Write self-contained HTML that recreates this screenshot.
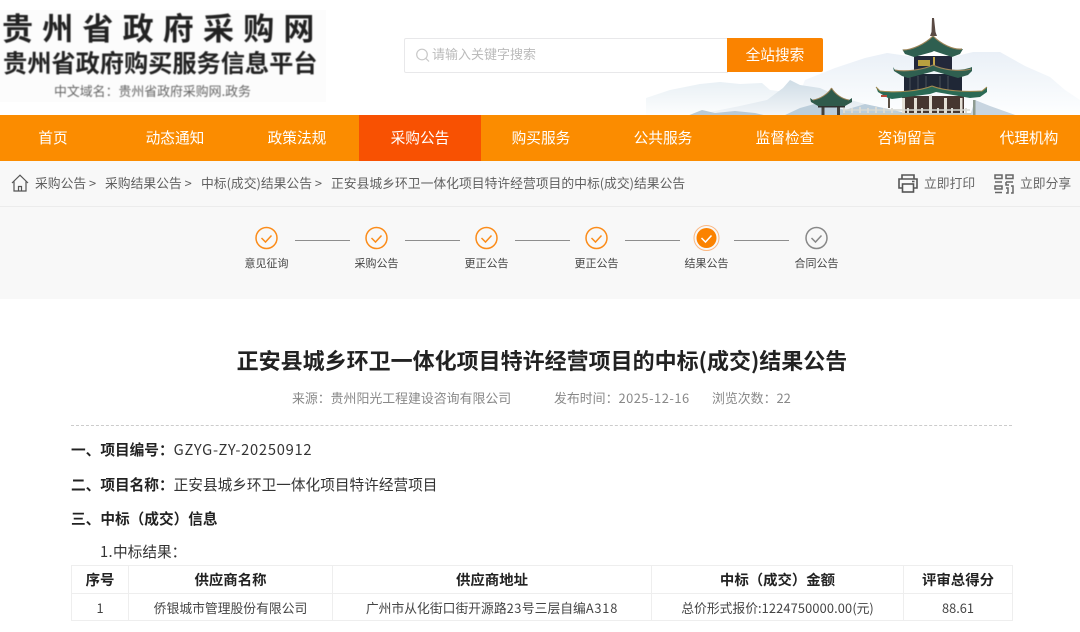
<!DOCTYPE html>
<html lang="zh-CN"><head><meta charset="utf-8"><title>中标(成交)结果公告</title>
<style>
*{box-sizing:border-box;margin:0;padding:0}
html,body{width:1080px;height:632px;overflow:hidden;background:#fff}
body{position:relative;font-family:"Noto Sans CJK SC","Liberation Sans",sans-serif;color:#333}
.a{position:absolute;white-space:nowrap;line-height:1}
.c{font-family:"Noto Sans CJK TC",sans-serif}
.nav{position:absolute;left:0;top:115px;width:1080px;height:46px;background:#fb8c00}
.nav div{position:absolute;top:0;width:122px;height:46px;line-height:46px;text-align:center;color:#fff;font-size:14.7px}
.nav .on{background:#f85102}
.st{position:absolute;width:60px;text-align:center;font-size:11px;line-height:14px;top:256px;color:#444}
.ln{position:absolute;top:240px;width:55px;height:1px;background:#8e8e8e}
.bc{top:177px;font-size:12.8px;color:#5f5f5f}
table{position:absolute;left:71px;top:565px;width:941px;border-collapse:collapse;table-layout:fixed}
td,th{border:1px solid #eee;text-align:center;font-size:12.8px;color:#444;font-weight:400;height:27px;padding:0}
th{font-weight:700;font-size:14.4px;color:#222;height:28px}
</style></head><body>

<div style="position:absolute;left:0;top:10px;width:326px;height:92px;background:#fcfcfc"></div>
<div style="filter:blur(.4px)">
<div class="a" style="left:2px;top:11px;font-size:31px;font-weight:700;letter-spacing:9.2px;color:#222">贵州省政府采购网</div>
<div class="a" style="left:3px;top:50px;font-size:24.2px;font-weight:700;color:#222">贵州省政府购买服务信息平台</div>
<div class="a" style="left:54px;top:85px;font-size:12.9px;color:#666">中文域名<span class="c">：</span>贵州省政府采购网.政务</div>
</div>

<svg style="position:absolute;left:640px;top:0" width="440" height="116" viewBox="0 0 440 116">
<defs>
<linearGradient id="m" x1="0" y1="0" x2="0" y2="1"><stop offset="0" stop-color="#eaf0f7"/><stop offset="1" stop-color="#feffff"/></linearGradient>
<linearGradient id="f" x1="0" y1="0" x2="0" y2="1"><stop offset="0" stop-color="#e9f0f5"/><stop offset="1" stop-color="#fdfefe"/></linearGradient>
<linearGradient id="n" x1="0" y1="0" x2="0" y2="1"><stop offset="0" stop-color="#cfdde6"/><stop offset="1" stop-color="#f3f6f9"/></linearGradient>
</defs>
<path d="M6 98 30 90 60 84 80 82 100 84 122 83 130 90 180 96 190 116H6Z" fill="url(#f)"/>
<path d="M165 80 195 68 225 58 247 53 275 57 300 60 333 52 360 52 385 66 410 77 425 90 440 100V116H150Z" fill="url(#m)"/>
<path d="M70 112 100 106 127 100 143 88 150 80 160 85 180 88 200 97 225 104 250 110 265 116H60Z" fill="url(#n)"/>
<path d="M47 116 62 110 75 113 95 111 115 113 128 116Z" fill="#b9cad7"/>
<path d="M143 116 160 108 178 103 205 110 225 104 262 112 270 116Z" fill="#bccedb"/>
<path d="M335 100 350 106 378 116H330Z" fill="#c8d5e0"/>
<!-- spire -->
<path d="M292 18h2l1.500 14 1.500 4h-7l1.500-4Z" fill="#5a4a44"/>
<!-- top tier -->
<rect x="274" y="56" width="38" height="14" fill="#23283a"/>
<rect x="278" y="60" width="12" height="6" fill="#b9a03f"/>
<rect x="293" y="57" width="2" height="8" fill="#c5a84a"/>
<path d="M293 36C285 44 272 50 263 50L262 49 265 54 274 57 292 52 294 51 312 57 320 54 323 49C313 50 301 44 293 36Z" fill="#2f5f50"/>
<path d="M293 36C285 44 272 50 263 50M293 36C301 44 313 50 322 49" fill="none" stroke="#9c8458" stroke-width="1.200"/>
<!-- mid tier -->
<rect x="264" y="74" width="58" height="17" fill="#1f2736"/>
<path d="M270 76v14M278 76v14M286 76v14M300 76v14M308 76v14" stroke="#48505a" stroke-width="1"/>
<path d="M293 65C283 70 265 72 255 70L253 67 254 71 262 76 268 78 291 72 294 71 318 78 328 75 332 71 332 67C320 72 303 70 293 65Z" fill="#2f5f50"/>
<path d="M293 65C283 70 265 72 255 70M293 65C303 70 320 72 331 69" fill="none" stroke="#9c8458" stroke-width="1.100"/>
<!-- bottom tier -->
<rect x="262" y="96" width="62" height="19" fill="#463630"/>
<path d="M292 86C280 91 257 93 240 91L236 87 238 92 248 98 252 99 290 94 296 92 330 98 340 97 347 92 347 87 342 91C326 92 304 91 292 86Z" fill="#2b6a55"/>
<path d="M292 86C280 91 257 93 240 91L236 87M292 86C304 91 326 92 342 91L347 87" fill="none" stroke="#a38a50" stroke-width="1.100"/>
<path d="M241 95h6v2h-6Z" fill="#b34a3a"/>
<g fill="#e4e0d6"><rect x="262" y="98" width="3" height="17"/><rect x="274" y="98" width="3" height="17"/><rect x="289" y="95" width="3" height="20"/><rect x="304" y="98" width="3" height="17"/><rect x="320" y="98" width="2.500" height="17"/></g>
<rect x="333" y="100" width="2.500" height="15" fill="#8e9b90"/>
<rect x="248" y="98" width="2" height="10" fill="#5b5045"/>
<!-- railing -->
<path d="M203 110H330" stroke="#d6d8d2" stroke-width="1.500"/>
<path d="M204 108v7M212 108v7M220 107v8M228 108v7M236 107v8M244 108v7M252 108v7M268 108v7M282 108v7M298 108v7M312 108v7M326 108v7" stroke="#dcdcd6" stroke-width="2"/>
<rect x="203" y="113" width="128" height="2.500" fill="#c9ccc2"/>
<!-- small pavilion -->
<rect x="181.500" y="104" width="3" height="12" fill="#44423c"/><rect x="197" y="104" width="3" height="12" fill="#44423c"/>
<rect x="178" y="104" width="27" height="3.500" fill="#2f2f2c"/>
<path d="M191.500 88C188 94 180 99 173 100L170 98 171 102 178 106H205L212 102 212 98 209 100C202 99 195 94 191.500 88Z" fill="#2f5a4b"/>
<path d="M191.500 88C188 94 180 99 173 100M191.500 88C195 94 202 99 209 100" fill="none" stroke="#9c8458" stroke-width="1"/>
</svg>

<div style="position:absolute;left:404px;top:38px;width:324px;height:35px;border:1px solid #e8e8ea;border-radius:2px 0 0 2px;background:#fff"></div>
<svg style="position:absolute;left:414px;top:47px" width="18" height="18" viewBox="0 0 18 18" fill="none" stroke="#c8c8c8" stroke-width="1.200"><circle cx="8" cy="7.500" r="5.300"/><path d="M12 11.500l3 3"/></svg>
<div class="a" style="left:432px;top:47px;font-size:13px;color:#bbb">请输入关键字搜索</div>
<div class="a" style="left:727px;top:38px;width:96px;height:34px;line-height:34px;background:#fa8300;border-radius:0 2px 2px 0;color:#fff;text-align:center;font-size:14.7px">全站搜索</div>

<div class="nav">
<div style="left:-8px">首页</div><div style="left:114px">动态通知</div><div style="left:236px">政策法规</div><div class="on" style="left:359px">采购公告</div><div style="left:480px">购买服务</div><div style="left:602px">公共服务</div><div style="left:724px">监督检查</div><div style="left:846px">咨询留言</div><div style="left:968px">代理机构</div>
</div>

<div style="position:absolute;left:0;top:161px;width:1080px;height:138px;background:#f8f8f8"></div>
<div style="position:absolute;left:0;top:206px;width:1080px;height:1px;background:#ececec"></div>
<svg style="position:absolute;left:11px;top:174px" width="18" height="18" viewBox="0 0 18 18" fill="none" stroke="#555" stroke-width="1.200"><path d="M1 9 9 1.200 17 9M3 7.500V17H15V7.500M7.500 17V12.500H10.500V17"/></svg>
<div class="a bc" style="left:35px">采购公告 &gt;</div>
<div class="a bc" style="left:105px">采购结果公告 &gt;</div>
<div class="a bc" style="left:201px">中标(成交)结果公告 &gt;</div>
<div class="a bc" style="left:331px">正安县城乡环卫一体化项目特许经营项目的中标(成交)结果公告</div>

<svg style="position:absolute;left:897px;top:173px" width="22" height="21" viewBox="0 0 22 21" fill="none" stroke="#555" stroke-width="1.600"><path d="M5 6V2H17V6M5 15H2V6H20V15H17"/><rect x="5.500" y="11" width="11" height="8"/><path d="M15 8.500h2.500"/></svg>
<div class="a bc" style="left:924px;color:#666">立即打印</div>
<svg style="position:absolute;left:994px;top:174px" width="20" height="20" viewBox="0 0 20 20" fill="none" stroke="#666" stroke-width="1.500"><rect x="1" y="1" width="7" height="3.500"/><path d="M1 8H8M12 1h7v3.500h-7ZM12 8h7M12 8v3h3M1 12h7v3H1ZM1 18.500H8M12 14h2v5h-2M17 12h2v7h-2"/></svg>
<div class="a bc" style="left:1020px;color:#666">立即分享</div>

<svg style="position:absolute;left:0;top:220px" width="1080" height="40" fill="none">
<g stroke="#fb8c1a" stroke-width="1.500">
<circle cx="266.500" cy="18" r="10.500"/><path d="M261.500 18l4 4 6-6.500"/>
<circle cx="376.500" cy="18" r="10.500"/><path d="M371.500 18l4 4 6-6.500"/>
<circle cx="486.500" cy="18" r="10.500"/><path d="M481.500 18l4 4 6-6.500"/>
<circle cx="596.500" cy="18" r="10.500"/><path d="M591.500 18l4 4 6-6.500"/>
</g>
<circle cx="706.500" cy="18" r="12.500" stroke="#fbb883" stroke-width="1"/><circle cx="706.500" cy="18" r="10" fill="#fb8200"/><path d="M701.500 18l4 4 6-6.500" stroke="#fff" stroke-width="1.500"/>
<circle cx="816.500" cy="18" r="10.500" stroke="#888" stroke-width="1.500"/><path d="M811.500 18l4 4 6-6.500" stroke="#888" stroke-width="1.500"/>
</svg>
<div class="ln" style="left:295px"></div><div class="ln" style="left:405px"></div><div class="ln" style="left:515px"></div><div class="ln" style="left:625px"></div><div class="ln" style="left:734px"></div>
<div class="st" style="left:236.500px">意见征询</div><div class="st" style="left:346.500px">采购公告</div><div class="st" style="left:456.500px">更正公告</div><div class="st" style="left:566.500px">更正公告</div><div class="st" style="left:676.500px">结果公告</div><div class="st" style="left:786.500px">合同公告</div>

<div class="a" style="left:0;width:1084px;text-align:center;top:349px;font-size:22px;font-weight:700;color:#222">正安县城乡环卫一体化项目特许经营项目的中标(成交)结果公告</div>
<div class="a" style="left:292px;top:392px;font-size:12.9px;color:#888">来源<span class="c">：</span>贵州阳光工程建设咨询有限公司</div>
<div class="a" style="left:554px;top:392px;font-size:12.9px;color:#888">发布时间<span class="c">：</span><span style="letter-spacing:.5px">2025-12-16</span></div>
<div class="a" style="left:712px;top:392px;font-size:12.9px;color:#888">浏览次数<span class="c">：</span>22</div>
<div style="position:absolute;left:71px;top:425px;width:941px;border-top:1px dashed #ccc"></div>

<div class="a" style="left:71px;top:443px;font-size:14.67px;color:#333"><b style="color:#222">一、项目编号<span class="c">：</span></b><span style="letter-spacing:.75px">GZYG-ZY-20250912</span></div>
<div class="a" style="left:71px;top:478px;font-size:14.67px;color:#333"><b style="color:#222">二、项目名称<span class="c">：</span></b>正安县城乡环卫一体化项目特许经营项目</div>
<div class="a" style="left:71px;top:512px;font-size:14.67px;font-weight:700;color:#222">三、中标（成交）信息</div>
<div class="a" style="left:100px;top:545px;font-size:14.67px;color:#333"><span style="letter-spacing:.4px">1.</span>中标结果<span class="c">：</span></div>

<table>
<colgroup><col style="width:57px"><col style="width:204px"><col style="width:319px"><col style="width:252px"><col style="width:109px"></colgroup>
<tr><th>序号</th><th>供应商名称</th><th>供应商地址</th><th>中标（成交）金额</th><th>评审总得分</th></tr>
<tr><td>1</td><td>侨银城市管理股份有限公司</td><td>广州市从化街口街开源路<span style="letter-spacing:.5px">23</span>号三层自编<span style="letter-spacing:.8px">A318</span></td><td>总价形式报价:<span style="letter-spacing:.15px">1224750000.00</span>(元)</td><td>88.61</td></tr>
</table>
</body></html>
